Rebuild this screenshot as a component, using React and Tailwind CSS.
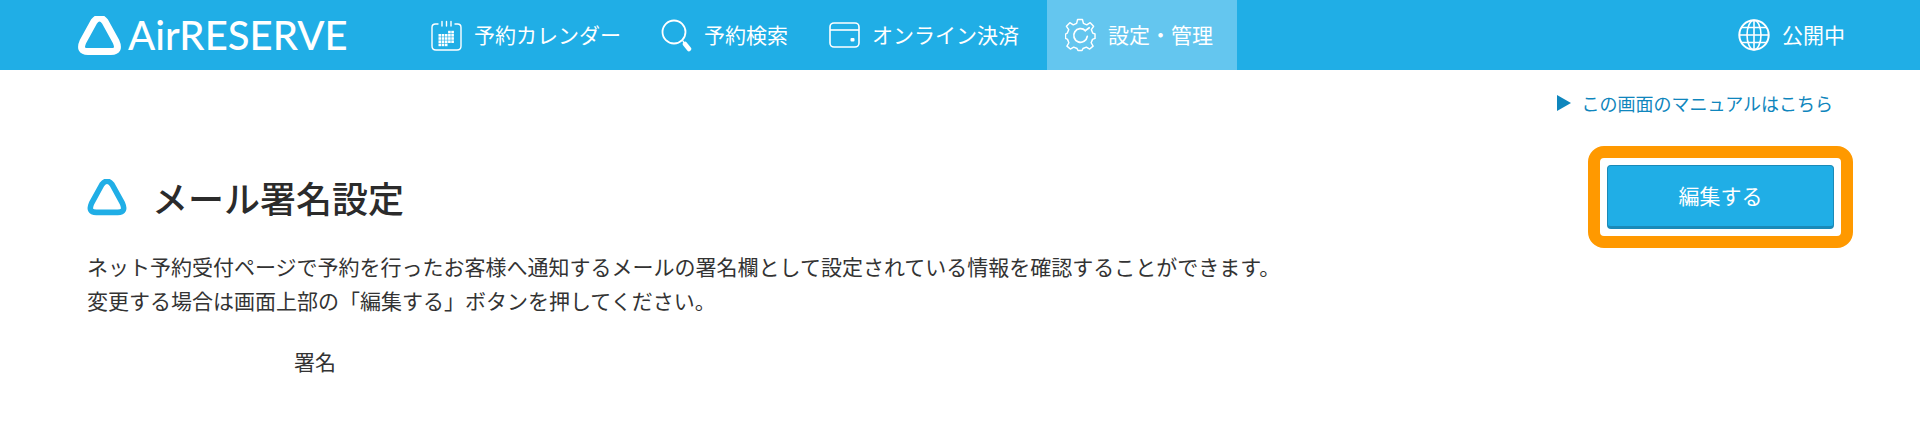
const font = { fontFamily: '"Noto Sans CJK JP", "Noto Sans", sans-serif' };

function Tri({ className, stroke, sw = 6 }) {
  return (
    <svg viewBox="0 0 43 39" className={className} fill="none" stroke={stroke} strokeWidth={sw} strokeLinejoin="round">
      <path d="M5 25.5 L16 5.5 Q21.5 -1.5 27 5.5 L38 25.5 Q42.5 35.5 33 35.5 L10 35.5 Q0.5 35.5 5 25.5 Z" />
    </svg>
  );
}

function CalendarIcon() {
  const dots = [];
  for (let r = 0; r < 5; r++) for (let c = 0; c < 5; c++) {
    if (r === 0 && c < 3) continue;
    if (r === 4 && c > 2) continue;
    dots.push(<rect key={r + '-' + c} x={8.2 + c * 3.2} y={11.5 + r * 3.2} width="1.2" height="1.2" fill="#fff" />);
  }
  return (
    <svg viewBox="0 0 31 31" className="w-[31px] h-[31px] shrink-0" fill="none" stroke="#fff" strokeWidth="1.4" strokeLinecap="round">
      <path d="M7 4 H4.5 Q1 4 1 7.5 V26 Q1 30 5 30 H26 Q30 30 30 26 V7.5 Q30 4 26.5 4 H24" />
      <path d="M11 1.5 V6 M15.5 1.5 V6 M20 1.5 V6" />
      {dots}
    </svg>
  );
}

function SearchIcon() {
  return (
    <svg viewBox="0 0 31 34" className="w-[31px] h-[34px] shrink-0" fill="none" stroke="#fff" strokeLinecap="round">
      <circle cx="13" cy="14" r="11.5" strokeWidth="1.8" />
      <path d="M22 23 L26 30" strokeWidth="1.5" />
      <path d="M24 26 L28 31" strokeWidth="4.5" />
    </svg>
  );
}

function WalletIcon() {
  return (
    <svg viewBox="0 0 31 26" className="w-[31px] h-[26px] shrink-0" fill="none" stroke="#fff" strokeWidth="1.6">
      <rect x="1" y="1" width="29" height="24" rx="4" />
      <path d="M1 8 H30" />
      <rect x="21.5" y="16" width="4" height="3.6" rx="1" fill="#fff" stroke="none" />
    </svg>
  );
}

function GearIcon() {
  const d = 'M13 1.5 H18 L19 5.5 L22.5 7 L26 4.8 L29.5 8.5 L27.2 12 L28.6 15.5 L31 16.5 V21 L28.4 22 L27 25.5 L29 29 L25.5 32 L22 30 L18.6 31.4 L17.6 33.5 H13.4 L12.4 31.4 L9 30 L5.5 32 L2 29 L4 25.5 L2.6 22 L0.5 21 V16.5 L2.4 15.5 L3.8 12 L1.5 8.5 L5 4.8 L8.5 7 L12 5.5 Z';
  return (
    <svg viewBox="0 0 32 35" className="w-[31px] h-[34px] shrink-0" fill="none" stroke="#fff" strokeWidth="1.5" strokeLinejoin="round">
      <path d={d} />
      <path d="M21 13 A7 7 0 1 0 23 19" strokeWidth="1.8" strokeLinecap="round" />
      <path d="M21 13 L25 10" strokeWidth="1.8" strokeLinecap="round" />
    </svg>
  );
}

function GlobeIcon() {
  return (
    <svg viewBox="0 0 32 32" className="w-[32px] h-[32px] shrink-0" fill="none" stroke="#fff" strokeWidth="1.6">
      <circle cx="16" cy="16" r="14.7" strokeWidth="2" />
      <ellipse cx="16" cy="16" rx="7" ry="14.7" />
      <path d="M16 1 V31 M1.5 16 H30.5 M4 8.5 H28 M4 23.5 H28" />
    </svg>
  );
}

function NavItem({ icon, label, className = '' }) {
  return (
    <div className={'h-full flex items-center gap-[12px] text-white text-[21px] whitespace-nowrap ' + className}>
      {icon}
      <span>{label}</span>
    </div>
  );
}

export default function App() {
  return (
    <div className="w-[1920px] h-[422px] bg-white overflow-hidden text-[#333]" style={font}>
      <header className="h-[70px] bg-[#20aee6] flex items-center">
        <div className="w-[431px] pl-[78px] flex items-center gap-[7px]">
          <Tri className="w-[43px] h-[39px]" stroke="#fff" sw={7} />
          <span className="text-white text-[40px] font-medium leading-none tracking-[0.05px]" style={{ fontFamily: 'Lato, sans-serif' }}>AirRESERVE</span>
        </div>
        <NavItem icon={<CalendarIcon />} label="予約カレンダー" />
        <NavItem icon={<SearchIcon />} label="予約検索" className="ml-[40px]" />
        <NavItem icon={<WalletIcon />} label="オンライン決済" className="ml-[41px]" />
        <NavItem icon={<GearIcon />} label="設定・管理" className="ml-[28px] px-[18px] bg-[#64c6ef] w-[190px]" />
        <div className="ml-auto pr-[75px]">
          <NavItem icon={<GlobeIcon />} label="公開中" />
        </div>
      </header>

      <div className="h-[76px] pt-[18px] pr-[87px] flex justify-end items-start">
        <a className="flex items-center h-[30px] text-[#0f86bd] text-[18px] gap-[11px]">
          <svg viewBox="0 0 14 16" className="w-[14px] h-[16px]"><path d="M0 0 L14 8 L0 16 Z" fill="#0f86bd" /></svg>
          この画面のマニュアルはこちら
        </a>
      </div>

      <div className="flex items-center justify-between pl-[87px] pr-[67px]">
        <div className="flex items-center gap-[25px]">
          <Tri className="w-[40px] h-[37px]" stroke="#20aee6" sw={6} />
          <h1 className="text-[36px] leading-[48px] font-medium text-[#2b2b2b]">メール署名設定</h1>
        </div>
        <div className="border-[12px] border-[#ff9900] rounded-[16px] p-[7px]">
          <button className="w-[227px] h-[64px] bg-[#20aee6] border border-[#1a8ab8] border-b-[3px] rounded-[4px] text-white text-[21px]">編集する</button>
        </div>
      </div>

      <div className="pl-[87px] mt-[1px] text-[21px] leading-[34px]">
        <p>ネット予約受付ページで予約を行ったお客様へ通知するメールの署名欄として設定されている情報を確認することができます。</p>
        <p>変更する場合は画面上部の「編集する」ボタンを押してください。</p>
      </div>

      <div className="pl-[294px] mt-[27px] text-[21px] leading-[34px]">署名</div>
    </div>
  );
}
